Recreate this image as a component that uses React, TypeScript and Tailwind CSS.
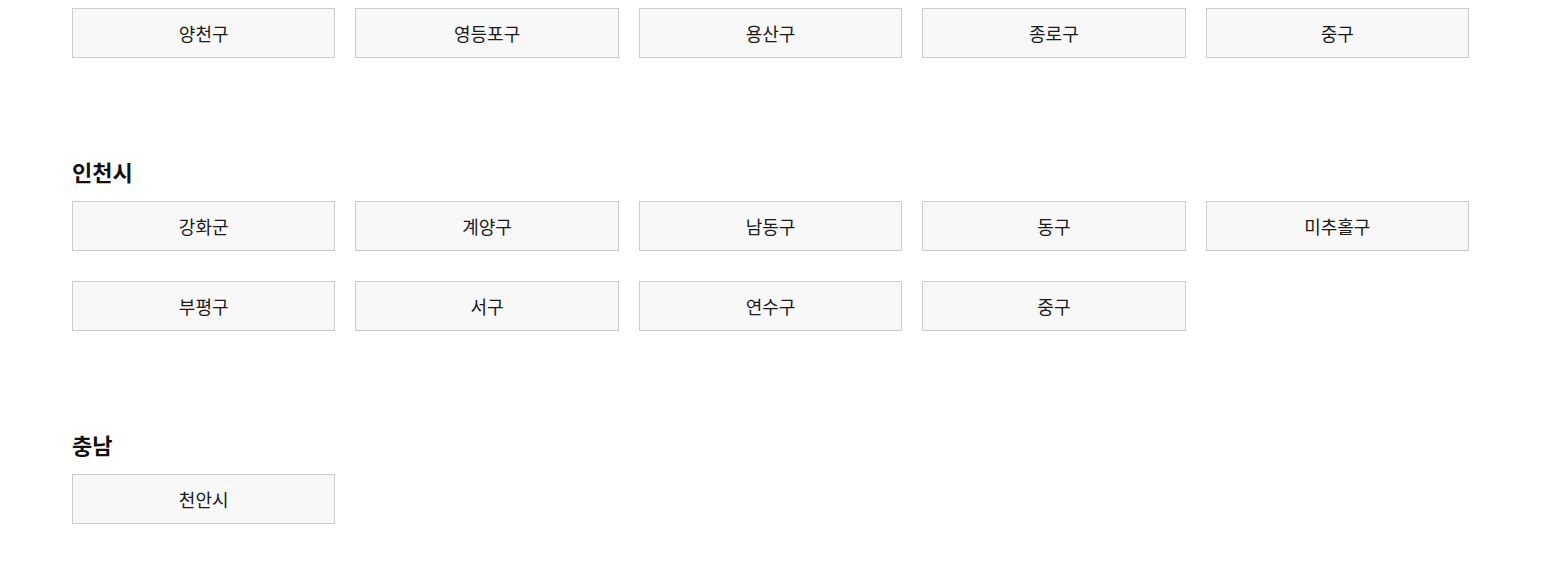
const sections: { title?: string; items: string[] }[] = [
  { items: ["양천구", "영등포구", "용산구", "종로구", "중구"] },
  {
    title: "인천시",
    items: ["강화군", "계양구", "남동구", "동구", "미추홀구", "부평구", "서구", "연수구", "중구"],
  },
  { title: "충남", items: ["천안시"] },
];

const App = () => {
  return (
    <div
      className="min-h-[588px] bg-white px-[72px] pt-2 text-[#222]"
      style={{ fontFamily: '"Noto Sans CJK KR", "Noto Sans", sans-serif' }}
    >
      <div className="w-[1397px]">
        {sections.map((s, i) => (
          <section key={i} className={i > 0 ? "mt-[98px]" : ""}>
            {s.title && (
              <h3 className="mb-[15px] text-[22px] font-bold leading-[30px] text-[#111]">
                {s.title}
              </h3>
            )}
            <div className="grid grid-cols-5 gap-x-5 gap-y-[30px]">
              {s.items.map((item, j) => (
                <button
                  key={j}
                  className="h-[50px] border border-[#cccccc] bg-[#f8f8f8] text-[18px] text-[#1a1a1a]"
                >
                  {item}
                </button>
              ))}
            </div>
          </section>
        ))}
      </div>
    </div>
  );
};

export default App;
